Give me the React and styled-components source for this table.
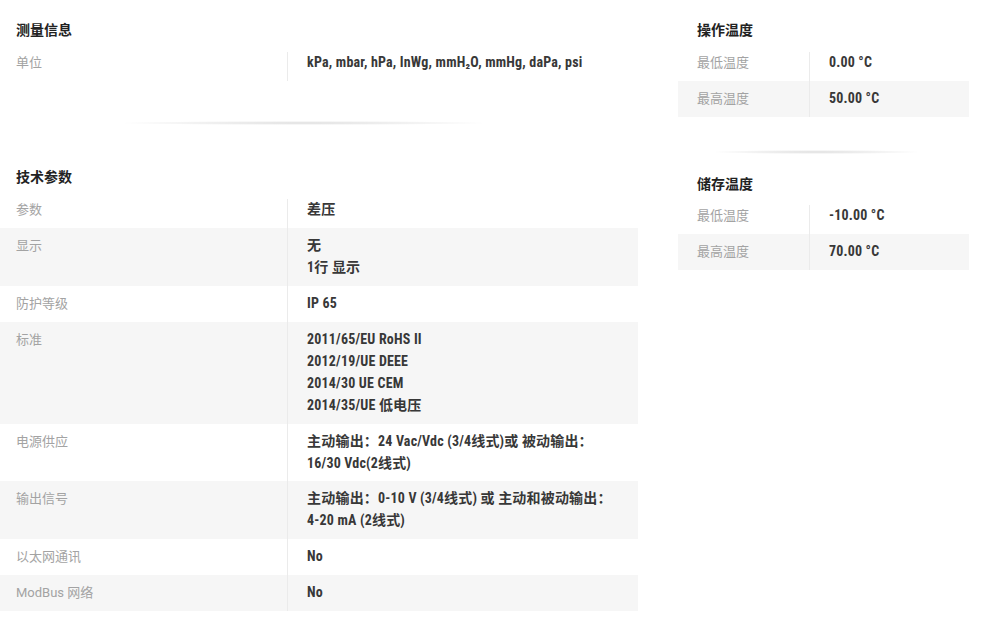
import React from "react";
import styled, { createGlobalStyle } from "styled-components";

const Global = createGlobalStyle`
  html, body { margin: 0; padding: 0; background: #fff; }
  body { font-family: Roboto, "Noto Sans CJK SC", sans-serif; }
`;

const Page = styled.div`
  display: flex;
  align-items: flex-start;
  gap: 40px;
  width: 995px;
`;

const Column = styled.div`
  width: ${(p) => p.$w}px;
  display: flex;
  flex-direction: column;
`;

const Heading = styled.h3`
  margin: ${(p) => p.$top}px 0 ${(p) => p.$bottom}px;
  padding-left: ${(p) => p.$pad}px;
  font-family: Roboto, "Noto Sans CJK SC", sans-serif;
  font-size: 14px;
  font-weight: 700;
  line-height: 20px;
  color: #222;
`;

const Table = styled.div`
  display: flex;
  flex-direction: column;
`;

const Row = styled.div`
  display: grid;
  grid-template-columns: 45% 55%;
  background: ${(p) => (p.$alt ? "#f6f6f6" : "#fff")};
  &:first-child > div { padding-top: 0; }
`;

const Label = styled.div`
  padding: 7px 0 7px ${(p) => p.$pad}px;
  font-family: Roboto, "Noto Sans CJK SC", sans-serif;
  font-size: 13px;
  font-weight: 400;
  line-height: 21.9px;
  color: #a3a3a3;
`;

const Value = styled.div`
  padding: 7px 8px 7px 19px;
  border-left: 1px solid #ebebeb;
  font-family: Roboto, "Noto Sans CJK SC", sans-serif;
  font-size: 14px;
  font-weight: 700;
  font-stretch: 87%;
  letter-spacing: 0.18px;
  line-height: 21.9px;
  color: #383838;
  white-space: nowrap;
`;

const Shadow = styled.div`
  height: 4px;
  width: ${(p) => p.$w}px;
  margin: ${(p) => p.$top}px 0 0 ${(p) => p.$left}px;
  background: radial-gradient(ellipse at center, rgba(0, 0, 0, 0.13) 0%, rgba(0, 0, 0, 0.05) 45%, rgba(0, 0, 0, 0) 72%);
`;

const Section = ({ title, rows, pad, top, bottom }) => (
  <>
    <Heading $top={top} $bottom={bottom} $pad={pad}>{title}</Heading>
    <Table>
      {rows.map((r, i) => (
        <Row key={i} $alt={i % 2 === 1}>
          <Label $pad={pad}>{r[0]}</Label>
          <Value>
            {r[1].map((line, j) => (
              <div key={j}>{line}</div>
            ))}
          </Value>
        </Row>
      ))}
    </Table>
  </>
);

const measure = [["单位", ["kPa, mbar, hPa, InWg, mmH₂O, mmHg, daPa, psi"]]];

const tech = [
  ["参数", ["差压"]],
  ["显示", ["无", "1行 显示"]],
  ["防护等级", ["IP 65"]],
  ["标准", ["2011/65/EU RoHS II", "2012/19/UE DEEE", "2014/30 UE CEM", "2014/35/UE 低电压"]],
  ["电源供应", ["主动输出：24 Vac/Vdc (3/4线式)或 被动输出：", "16/30 Vdc(2线式)"]],
  ["输出信号", ["主动输出：0-10 V (3/4线式) 或 主动和被动输出：", "4-20 mA (2线式)"]],
  ["以太网通讯", ["No"]],
  ["ModBus 网络", ["No"]],
];

const opTemp = [
  ["最低温度", ["0.00 °C"]],
  ["最高温度", ["50.00 °C"]],
];

const storeTemp = [
  ["最低温度", ["-10.00 °C"]],
  ["最高温度", ["70.00 °C"]],
];

export default function App() {
  return (
    <>
      <Global />
      <Page>
        <Column $w={638}>
          <Section title="测量信息" rows={measure} pad={16} top={20} bottom={12} />
          <Shadow $w={367} $left={120} $top={40} />
          <Section title="技术参数" rows={tech} pad={16} top={42.5} bottom={12} />
        </Column>
        <Column $w={291}>
          <Section title="操作温度" rows={opTemp} pad={19} top={20} bottom={12} />
          <Shadow $w={207} $left={35} $top={33} />
          <Section title="储存温度" rows={storeTemp} pad={19} top={20} bottom={11} />
        </Column>
      </Page>
    </>
  );
}
